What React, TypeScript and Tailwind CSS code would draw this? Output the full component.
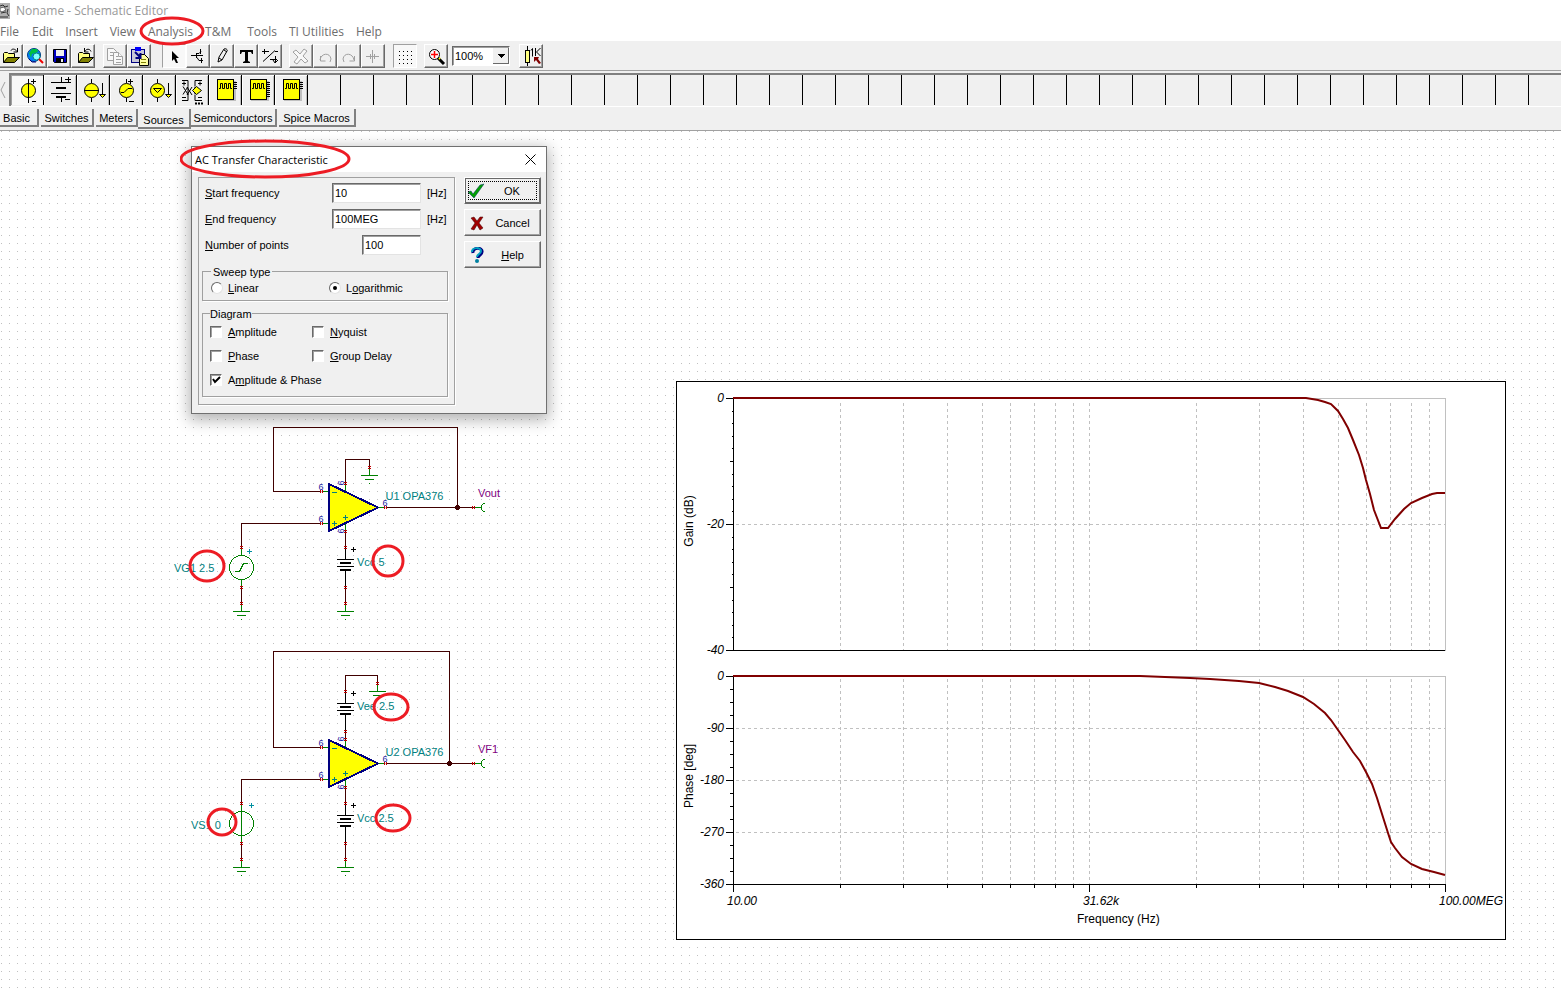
import type { ReactNode } from 'react';

const UI = "font-['Open_Sans','Noto_Sans',sans-serif]";
const SANS = "font-['Liberation_Sans',Arial,sans-serif]";
const RAISED = 'border border-t-white border-l-white border-r-[#696969] border-b-[#696969] shadow-[inset_-1px_-1px_0_#a0a0a0]';
const SUNKEN = 'border border-t-[#a0a0a0] border-l-[#a0a0a0] border-r-white border-b-white';

const MENU = [
  { label: 'File', space: 'mr-[13px]' },
  { label: 'Edit', space: 'mr-3' },
  { label: 'Insert', space: 'mr-3' },
  { label: 'View', space: 'mr-3' },
  { label: 'Analysis', space: 'mr-3' },
  { label: 'T&M', space: 'mr-4' },
  { label: 'Tools', space: 'mr-3' },
  { label: 'TI Utilities', space: 'mr-3' },
  { label: 'Help', space: 'mr-3' },
];

const ICONS: Record<string, ReactNode> = {
  open: (
    <>
      <path d="M4.500 18.500V9.500l1-1h3l1 1h6v5" fill="#ffff80" stroke="#000" />
      <path d="M4.500 18.500l4-5h12l-5 5z" fill="#808000" stroke="#000" />
      <path d="M12 6.500c1-2 4-2 6 1M18.500 4v4h-4" fill="none" stroke="#000" />
    </>
  ),
  globe: (
    <>
      <circle cx="11" cy="11" r="6.500" fill="#0080ff" stroke="#004080" />
      <path d="M6 9l3-4 5 0 1 3-3 1-3 1-1 4zM12 12l4-3 1 2-3 4z" fill="#00c040" />
      <circle cx="13.500" cy="12.500" r="3.500" fill="#80ffff" stroke="#008080" />
      <path d="M16 15l4 4" stroke="#f00000" strokeWidth="2" />
      <path d="M6 15l3 3 4 0" fill="none" stroke="#000080" />
    </>
  ),
  save: (
    <>
      <path d="M6.500 5.500h13v13h-12l-1-1z" fill="#0000c0" stroke="#000" />
      <rect x="9" y="6" width="8" height="6" fill="#f0f0f0" />
      <rect x="9" y="14" width="8" height="5" fill="#000" />
      <rect x="14" y="15" width="2" height="3" fill="#f0f0f0" />
    </>
  ),
  back: (
    <>
      <path d="M7.500 18.500V9.500l1-1h3l1 1h6v5" fill="#ffff80" stroke="#000" />
      <path d="M7.500 18.500l4-5h11l-5 5z" fill="#808000" stroke="#000" />
      <path d="M14 7.500c1-3 5-3 6 0M13.500 4v4h4" fill="none" stroke="#000" />
    </>
  ),
  copy: (
    <g fill="#f8f8f8" stroke="#a0a0a0">
      <path d="M4.500 4.500h6l3 3v9h-9z" />
      <path d="M7 8.500h3M7 11.500h4" />
      <path d="M10.500 8.500h5l4 4v8h-9z" />
      <path d="M15.500 8.500v4h4M13 12.500h2M13 15.500h5M13 18.500h5" />
    </g>
  ),
  paste: (
    <>
      <rect x="4.500" y="5.500" width="13" height="13" fill="#c8c8d8" stroke="#000080" />
      <rect x="8" y="3" width="6" height="4" fill="#0000ff" />
      <path d="M12.500 10.500h5l4 4v7h-9z" fill="#ffffa0" stroke="#000" />
      <path d="M14 15.500h5M14 18.500h5" stroke="#808000" />
      <path d="M8 8l5 5M13.500 9v5h-5" fill="none" stroke="#000080" strokeWidth="2" />
    </>
  ),
  arrow: <path d="M10 7v10l2-2 2 4h2l-2-5h3z" fill="#000" />,
  node: <path d="M5 11.500h5M10.500 9v5M11 9.500h2l2-2M10 11.500h7M11 13.500l2 3h4M14.500 5v5M15.500 14v5" fill="none" stroke="#000" />,
  pencil: <path d="M8 18l1-5 5-8c2-1 4 1 3 2l-5 9zM9 14l3 2M14 6l3 2" fill="#f0f0f0" stroke="#000" />,
  text: <path d="M6 6h13v4h-1l-1-2h-3v9l2 1v1H9v-1l2-1V8H8l-1 2H6z" fill="#000" />,
  tools: <path d="M4 7.500h7M6.500 5v5M5 17.500l12-11M12 15.500h7M17.500 12v7M15 16l2 3 3-3M17 7.500h3" fill="none" stroke="#000" />,
  remove: (
    <path d="M7 6l4 4 4-5 3 2-4 5 5 5-3 2-4-4-4 5-3-2 4-5-5-5z" fill="#f8f8f8" stroke="#a0a0a0" />
  ),
  undo: <path d="M7 16c1-7 10-8 11-1l-1 3M7.500 12v5h5" fill="none" stroke="#a0a0a0" />,
  redo: <path d="M17 16c-1-7-10-8-11-1l1 3M17.500 12v5h-5" fill="none" stroke="#a0a0a0" />,
  plus: <path d="M5 12.500h13M11.500 6v13M9.500 10v5M13.500 10v5" stroke="#a0a0a0" fill="none" />,
  grid: (
    <g fill="#000">
      {[7, 11, 15, 19].map((y) => [6, 10, 14, 18].map((x) => <rect key={`${x}-${y}`} x={x} y={y} width="1" height="1" />))}
    </g>
  ),
  zoom: (
    <>
      <circle cx="10.500" cy="10.500" r="5" fill="#fff" stroke="#000" />
      <path d="M10.500 7v7M7 10.500h7" stroke="#f00" strokeWidth="1.500" />
      <path d="M14 14l6 6" stroke="#000" strokeWidth="3" />
      <path d="M15 14l1 1" stroke="#ffff00" strokeWidth="2" />
    </>
  ),
};

const TOOL_GROUPS: { space: string; names: string[] }[] = [
  { space: '-ml-px', names: ['open', 'globe', 'save', 'back'] },
  { space: 'ml-2', names: ['copy', 'paste'] },
  { space: 'ml-[11px]', names: ['arrow', 'node', 'pencil', 'text', 'tools'] },
  { space: 'ml-[7px]', names: ['remove', 'undo', 'redo', 'plus'] },
  { space: 'ml-2', names: ['grid'] },
  { space: 'ml-[7px]', names: ['zoom'] },
];

function ToolButton({ name }: { name: string }) {
  const pressed = name === 'arrow' || name === 'grid';
  return (
    <button aria-label={name} className={`size-6 ${pressed ? `bg-[#f8f8f8] ${SUNKEN}` : RAISED}`}>
      <svg viewBox="1 1 22 22" className="block size-[22px]">
        {ICONS[name]}
      </svg>
    </button>
  );
}

function PulseIcon({ pins }: { pins: number }) {
  return (
    <>
      <rect x="9" y="6" width="18" height="20" fill="#c0c0c0" />
      <rect x="8.500" y="4.500" width="16" height="20" fill="#ff0" stroke="#000" />
      <path d="M10 13.500h1.500v-5h2v5h2v-5h2v5h2v-5h2v5h1.500" fill="none" stroke="#000" />
      {Array.from({ length: pins }, (_, i) => (
        <path key={i} d={`M25 ${7.5 + i * 2}h3`} stroke="#000" />
      ))}
    </>
  );
}

const PARTS: { name: string; art: ReactNode }[] = [
  {
    name: 'Voltage source',
    art: (
      <>
        <circle cx="17.500" cy="15.500" r="7" fill="#ff0" stroke="#000" />
        <path d="M17.500 4v24M20 6.500h5M22.500 4v5M21 26.500h4" stroke="#000" />
      </>
    ),
  },
  {
    name: 'Battery',
    art: (
      <>
        <path d="M17.500 2v5M7 7.500h20M7 18.500h20M17.500 22v5M21 4.500h6M24.500 2v5M21 24.500h5" stroke="#000" />
        <path d="M12 13h10M12 22h10" stroke="#000" strokeWidth="2" />
      </>
    ),
  },
  {
    name: 'Current source',
    art: (
      <>
        <circle cx="14.500" cy="15.500" r="7" fill="#ff0" stroke="#000" />
        <path d="M14.500 4v4M14.500 23v4M7 15.500h15M25.500 8v14" stroke="#000" />
        <path d="M22.500 19.500h6l-3 3z" fill="#ff0" stroke="#000" />
      </>
    ),
  },
  {
    name: 'Voltage generator',
    art: (
      <>
        <circle cx="16.500" cy="15.500" r="7" fill="#ff0" stroke="#000" />
        <path d="M16.500 4v4M16.500 23v4M18 6.500h5M20.500 4v5M19 26.500h5M11 17.500h3l4-4h4" fill="none" stroke="#000" />
      </>
    ),
  },
  {
    name: 'Current generator',
    art: (
      <>
        <circle cx="14.500" cy="15.500" r="7" fill="#ff0" stroke="#000" />
        <path d="M14.500 4v4M14.500 23v4M10.500 13.500h8l-4 4zM25.500 8v14" fill="none" stroke="#000" />
        <path d="M22.500 19.500h6l-3 3z" fill="#ff0" stroke="#000" />
      </>
    ),
  },
  {
    name: 'Controlled source',
    art: (
      <>
        <path d="M6 5.500h6v6l-5 8M12 25.500v-6l-5-8M6 25.500h6M26 5.500h-7v6M26 25.500h-7v-6" fill="none" stroke="#000" />
        <path d="M12 12v8M19 12v7M6 8.500h4M8 6.500v4M6 22.500h4M22 8.500h4M24 6.500v4M22 22.500h4M11 12l5 8M16 12l-5 8" stroke="#000" />
        <path d="M16.500 15.500l4-4 5 4-5 4z" fill="#ff0" stroke="#000" />
        <path d="M19 28.500h8" stroke="#000" strokeWidth="2" strokeDasharray="2 1" />
      </>
    ),
  },
  { name: 'Digital source', art: <PulseIcon pins={4} /> },
  { name: 'Digital bus source', art: <PulseIcon pins={8} /> },
  { name: 'Clock source', art: <PulseIcon pins={4} /> },
];

const TABS = [
  { label: 'Basic', width: 'w-[39px] pr-[4px]' },
  { label: 'Switches', width: 'w-[53px] ml-[2px]' },
  { label: 'Meters', width: 'w-[42px] ml-[2px]' },
  { label: 'Sources', width: 'w-[53px]' },
  { label: 'Semiconductors', width: 'w-[86px]' },
  { label: 'Spice Macros', width: 'w-[77px] ml-[2px]' },
];

/* ---------- schematic ---------- */

function Mark({ x, y, flat = false }: { x: number; y: number; flat?: boolean }) {
  return flat ? (
    <path d={`M${x - 1} ${y - 1}v2M${x + 1} ${y - 1}v2`} stroke="#c00000" />
  ) : (
    <path d={`M${x - 1} ${y - 1}h2M${x - 1} ${y + 1}h2`} stroke="#c00000" />
  );
}

function Ground({ x, y }: { x: number; y: number }) {
  return <path d={`M${x} ${y - 6}v6M${x - 8} ${y}h16M${x - 4} ${y + 4}h8M${x} ${y + 8}h0`} stroke="#008000" />;
}

function Battery({ x, y }: { x: number; y: number }) {
  return (
    <>
      <path d={`M${x} ${y - 12}v12M${x - 8} ${y}h16M${x - 8} ${y + 7}h16M${x} ${y + 11}v17`} stroke="#000" />
      <path d={`M${x - 4.5} ${y + 3.5}h9M${x - 4.5} ${y + 10.5}h9`} stroke="#000" strokeWidth="2" />
      <path d={`M${x + 6} ${y - 10}h4M${x + 8} ${y - 12}v4`} stroke="#000" />
      <Mark x={x} y={y - 12} />
      <Mark x={x} y={y + 28} />
    </>
  );
}

// y is the line of the output pin
function OpAmp({ y, name }: { y: number; name: string }) {
  return (
    <>
      <path d={`M328.5 ${y - 23.5}V${y + 23.5}L377.5 ${y}Z`} fill="#ff0" stroke="#000080" strokeWidth="2" />
      <path d={`M323 ${y - 16}h4M323 ${y + 16}h4M379 ${y}h5M345 ${y - 23}v6M345 ${y + 17}v6`} stroke="#008000" />
      <path d={`M332 ${y - 15}h4M332 ${y + 16}h4M334 ${y + 14}v4M343 ${y + 10}h4M345 ${y + 8}v4`} stroke="#008080" />
      <Mark x={321} y={y - 16} flat />
      <Mark x={321} y={y + 16} flat />
      <Mark x={385} y={y} flat />
      <Mark x={345} y={y - 24} />
      <Mark x={345} y={y + 24} />
      <g fontSize="9" fill="#2020a0">
        <text x="318" y={y - 18}>6</text>
        <text x="318" y={y + 14}>6</text>
        <text x="382" y={y - 2}>6</text>
        <text transform={`translate(343 ${y - 22}) rotate(-90)`}>6</text>
        <text transform={`translate(343 ${y + 26}) rotate(-90)`}>6</text>
      </g>
      <text x="385" y={y - 8} fill="#008080">{name}</text>
    </>
  );
}

function Schematic() {
  return (
    <svg
      viewBox="160 420 360 470"
      className={`absolute left-[160px] top-[289px] h-[470px] w-[360px] text-[11px] ${SANS}`}
    >
      <g transform="translate(0.5 0.5)" fill="none" strokeLinecap="square" shapeRendering="crispEdges">
        <g stroke="#400000">
          <path d="M320 491H273V427H457V507M386 507H473M320 523H241V547M345 483V459H369V467M345 531V547M241 587V603M345 587V603" />
          <path d="M320 747H273V651H449V763M386 763H473M320 779H241V803M345 691V675H377V683M345 731V739M345 787V803M241 843V859M345 843V859" />
        </g>

        <Ground x={369} y={475} />
        <Ground x={345} y={611} />
        <Ground x={241} y={611} />
        <Ground x={377} y={691} />
        <Ground x={345} y={867} />
        <Ground x={241} y={867} />
        <Battery x={345} y={559} />
        <Battery x={345} y={703} />
        <Battery x={345} y={815} />
        <OpAmp y={507} name="U1 OPA376" />
        <OpAmp y={763} name="U2 OPA376" />

        <g stroke="#008000">
          <circle cx="241" cy="567" r="12" />
          <circle cx="241" cy="823" r="12" />
          <path d="M241 549v5M241 580v6M235 571h4l4 -8h4M241 805v37" />
          <path d="M475 507h6M484 503h-1l-2 2v4l2 2h1M475 763h6M484 759h-1l-2 2v4l2 2h1" />
        </g>
        <path d="M247 551h4M249 549v4M249 805h4M251 803v4" stroke="#0090a0" />
        {[547, 587, 603, 803, 843, 859].map((y) => (
          <Mark key={y} x={241} y={y} />
        ))}
        {[603, 859].map((y) => (
          <Mark key={y} x={345} y={y} />
        ))}
        <Mark x={369} y={467} />
        <Mark x={377} y={683} />
        <Mark x={473} y={507} flat />
        <Mark x={473} y={763} flat />
        <circle cx="457" cy="507" r="2" fill="#400000" stroke="#400000" />
        <circle cx="449" cy="763" r="2" fill="#400000" stroke="#400000" />
      </g>

      <g fill="#008080">
        <text x="174" y="572">VG1 2.5</text>
        <text x="357" y="566">Vcc 5</text>
        <text x="357" y="710">Vee 2.5</text>
        <text x="357" y="822">Vcc 2.5</text>
        <text x="191" y="829">VS1 0</text>
      </g>
      <g fill="#800080">
        <text x="478" y="497">Vout</text>
        <text x="478" y="753">VF1</text>
      </g>

      <g fill="none" stroke="#ed1c24" strokeWidth="3">
        <ellipse cx="207" cy="566" rx="17" ry="15" />
        <ellipse cx="388" cy="561" rx="15" ry="15" />
        <ellipse cx="391" cy="707" rx="17" ry="13" />
        <ellipse cx="393" cy="818" rx="17" ry="13" />
        <ellipse cx="222" cy="822" rx="14" ry="13" />
      </g>
    </svg>
  );
}

/* ---------- diagram ---------- */

const GRID_X = [840, 903, 947, 982, 1010, 1034, 1055, 1073, 1089, 1196, 1259, 1303, 1338, 1366, 1390, 1411, 1429];

const GAIN =
  '733,398 1306,398 1312,399 1318,400 1325,402 1331,404 1338,411 1343,419 1348,428 1353,440 1359,455 1363,468 1366,480 1370,494 1374,510 1381,528 1388,528 1395,519 1404,509 1411,503 1422,498 1432,494 1437,493 1445,493';

const PHASE =
  '733,676 1140,676 1165,677 1190,678 1210,679 1239,681 1259,683 1275,687 1288,691 1303,697 1314,704 1325,713 1331,720 1338,730 1345,740 1353,752 1360,761 1366,772 1372,784 1377,798 1382,814 1388,833 1391,842 1395,848 1402,857 1411,864 1422,869 1434,872 1445,875';

const Y_LABELS = [
  { text: '0', y: 398 },
  { text: '-20', y: 524 },
  { text: '-40', y: 650 },
  { text: '0', y: 676 },
  { text: '-90', y: 728 },
  { text: '-180', y: 780 },
  { text: '-270', y: 832 },
  { text: '-360', y: 884 },
];

function Diagram() {
  return (
    <svg
      viewBox="676 381 830 559"
      className={`absolute left-[676px] top-[250px] h-[559px] w-[830px] bg-white text-[12px] ${SANS}`}
    >
      <g transform="translate(0.5 0.5)" fill="none" shapeRendering="crispEdges">
        <rect x="676" y="381" width="829" height="558" stroke="#000" />
        <g stroke="#c0c0c0">
          <path d="M733 398H1445V650M733 676H1445V884" />
          <g strokeDasharray="3 3">
            {GRID_X.map((x) => (
              <path key={x} d={`M${x} 402V650M${x} 678V884`} />
            ))}
            {[524, 728, 780, 832].map((y) => (
              <path key={y} d={`M735 ${y}H1445`} />
            ))}
          </g>
        </g>
        <g stroke="#000" strokeLinecap="square">
          <path d="M733 398V650H1444M733 676V884H1444" />
          {Y_LABELS.map(({ y }) => (
            <path key={y} d={`M726 ${y}h7`} />
          ))}
          {Array.from({ length: 19 }, (_, i) => (
            <path key={i} d={`M${i % 10 === 4 ? 730 : 732} ${398 + Math.round((i + 1) * 12.6)}H733`} />
          ))}
          {Array.from({ length: 15 }, (_, i) => (
            <path key={i} d={`M730 ${676 + (i + 1) * 13}h3`} />
          ))}
          {GRID_X.map((x) => (
            <path key={x} d={`M${x} 884v3`} />
          ))}
          <path d="M733 884v7M1089 884v7M1445 884v7" />
        </g>
      </g>
      <g fill="none" stroke="#800000" strokeWidth="2">
        <polyline points={GAIN} />
        <polyline points={PHASE} />
      </g>
      <g className="italic">
        {Y_LABELS.map(({ text, y }) => (
          <text key={y} x="724" y={y + 4} textAnchor="end">{text}</text>
        ))}
        <text x="727" y="905">10.00</text>
        <text x="1083" y="905">31.62k</text>
        <text x="1439" y="905">100.00MEG</text>
      </g>
      <text x="1077" y="923">Frequency (Hz)</text>
      <text transform="translate(693 521) rotate(-90)" textAnchor="middle">Gain (dB)</text>
      <text transform="translate(693 776) rotate(-90)" textAnchor="middle">Phase [deg]</text>
    </svg>
  );
}

/* ---------- dialog ---------- */

const FIELD = 'h-5 border border-t-[#696969] border-l-[#696969] border-r-[#e3e3e3] border-b-[#e3e3e3] bg-white px-[2px] pb-px leading-[14px] shadow-[inset_1px_1px_0_#a0a0a0]';
const GROOVE = 'border border-[#a0a0a0] shadow-[1px_1px_0_#fff]';

function Field({ id, hot, label, value, width, unit }: { id: string; hot: string; label: string; value: string; width: string; unit?: string }) {
  return (
    <div className="flex items-center">
      <label htmlFor={id} className="flex-1">
        <u>{hot}</u>
        {label}
      </label>
      <input id={id} defaultValue={value} className={`${FIELD} ${width}`} />
      <span className="w-[30px] pl-[6px]">{unit}</span>
    </div>
  );
}

function Tick({ label, checked = false, className = '' }: { label: ReactNode; checked?: boolean; className?: string }) {
  return (
    <label className={`flex h-6 items-center gap-[6px] ${className}`}>
      <span className="relative size-3">
        <input
          type="checkbox"
          defaultChecked={checked}
          className="peer block size-3 appearance-none border border-t-[#696969] border-l-[#696969] border-r-white border-b-white bg-white shadow-[inset_1px_1px_0_#a0a0a0]"
        />
        <svg viewBox="0 0 12 12" className="pointer-events-none absolute inset-0 hidden size-3 peer-checked:block">
          <path d="M3 5l2 3 5-5" fill="none" stroke="#000" strokeWidth="2" />
        </svg>
      </span>
      <span>{label}</span>
    </label>
  );
}

function Choice({ label, checked = false }: { label: ReactNode; checked?: boolean }) {
  return (
    <label className="flex items-center gap-[5px]">
      <span className="relative size-3">
        <input
          type="radio"
          name="sweep"
          defaultChecked={checked}
          className="peer block size-3 appearance-none rounded-full border border-t-[#696969] border-l-[#696969] border-r-[#e3e3e3] border-b-[#e3e3e3] bg-white"
        />
        <svg viewBox="0 0 12 12" className="pointer-events-none absolute inset-0 hidden size-3 peer-checked:block">
          <circle cx="6" cy="6" r="2" />
        </svg>
      </span>
      <span>{label}</span>
    </label>
  );
}

function AcTransferDialog() {
  return (
    <div
      role="dialog"
      aria-label="AC Transfer Characteristic"
      className={`absolute left-[191px] top-[15px] w-[356px] border border-[#707070] bg-[#f0f0f0] text-[11px] leading-[14px] text-black shadow-[0_4px_14px_2px_rgba(0,0,0,0.3)] ${SANS}`}
    >
      <div className={`flex h-[25px] items-center justify-between bg-white pr-[10px] pl-[3px] ${UI}`}>
        <h2>AC Transfer Characteristic</h2>
        <button aria-label="Close">
          <svg viewBox="0 0 11 11" className="block size-[11px]">
            <path d="M0.500 0.500l10 10M10.500 0.500l-10 10" stroke="#000" />
          </svg>
        </button>
      </div>
      <svg viewBox="0 0 172 42" className="pointer-events-none absolute -top-2 -left-3 h-[42px] w-[172px]">
        <ellipse cx="85" cy="20" rx="84" ry="18" fill="none" stroke="#ed1c24" strokeWidth="3" />
      </svg>

      <div className="flex items-start gap-[9px] px-[6px] pt-[5px] pb-[8px]">
        <div className={`w-[257px] px-[3px] pt-[5px] pb-[7px] ${GROOVE}`}>
          <div className="flex flex-col gap-[6px] pl-[3px]">
            <Field id="start" hot="S" label="tart frequency" value="10" width="w-[89px]" unit="[Hz]" />
            <Field id="end" hot="E" label="nd frequency" value="100MEG" width="w-[89px]" unit="[Hz]" />
            <Field id="points" hot="N" label="umber of points" value="100" width="w-[59px]" />
          </div>

          <fieldset className={`mt-2 mr-[3px] h-[38px] pl-2 ${GROOVE}`}>
            <legend className="px-[2px] pt-[2px]">Sweep type</legend>
            <div className="grid grid-cols-2 pt-[2px]">
              <Choice label={<><u>L</u>inear</>} />
              <Choice label={<>L<u>o</u>garithmic</>} checked />
            </div>
          </fieldset>

          <fieldset className={`mt-1 mr-[3px] pb-1 pl-[7px] ${GROOVE}`}>
            <legend className="pt-[2px]">Diagram</legend>
            <div className="-mt-px grid grid-cols-[102px_1fr]">
              <Tick label={<><u>A</u>mplitude</>} />
              <Tick label={<><u>N</u>yquist</>} />
              <Tick label={<><u>P</u>hase</>} />
              <Tick label={<><u>G</u>roup Delay</>} />
              <Tick label={<>A<u>m</u>plitude &amp; Phase</>} checked className="col-span-2" />
            </div>
          </fieldset>
        </div>

        <div className="-mr-px flex flex-1 flex-col gap-[5px]">
          <button className={`relative flex h-[27px] items-center pl-[3px] ring-1 ring-[#696969] ring-inset ${RAISED}`}>
            <svg viewBox="0 0 16 16" className="size-4">
              <path d="M0 9l3-1 2 3 7-9 4-1-10 14z" fill="#00a000" stroke="#003060" strokeWidth="0.500" />
            </svg>
            <span className="flex-1">OK</span>
            <span className="pointer-events-none absolute inset-[3px] border border-dotted border-black" />
          </button>
          <button className={`flex h-[27px] items-center pl-1 ${RAISED}`}>
            <svg viewBox="0 0 16 16" className="size-4">
              <path d="M2 3l3-1 3 4 3-4 3 0-4 6 4 5-3 2-3-5-3 5-3-1 4-6z" fill="#a00000" stroke="#400000" strokeWidth="0.500" />
            </svg>
            <span className="flex-1">Cancel</span>
          </button>
          <button className={`flex h-[27px] items-center pl-1 ${RAISED}`}>
            <svg viewBox="0 0 16 16" className="size-4">
              <path d="M4 6c-1-6 10-6 9-1 0 3-4 3-4 6" fill="none" stroke="#000080" strokeWidth="3" />
              <path d="M3 5c0-5 9-5 9-1 0 3-4 3-4 6" fill="none" stroke="#00a0c0" strokeWidth="2" />
              <circle cx="8" cy="14" r="2" fill="#0080a0" />
            </svg>
            <span className="flex-1"><u>H</u>elp</span>
          </button>
        </div>
      </div>
    </div>
  );
}

/* ---------- window ---------- */

export default function App() {
  return (
    <div className={`flex min-h-screen flex-col overflow-hidden bg-white text-[11px] text-black ${SANS}`}>
      <header className={`flex h-[22px] items-center gap-[6px] text-[12px] text-[#999] ${UI}`}>
        <svg viewBox="0 0 10 16" className="h-4 w-[10px]">
          <rect width="10" height="16" fill="#b0b0b0" />
          <path d="M0 3l3-1 2 2 3-1M1 10l5-1M8 6l-1 4 2 3M0 14h8" fill="none" stroke="#303030" />
          <path d="M0 5l4-1 2 3-4 2-2-1z" fill="#fff" stroke="#606060" />
        </svg>
        <h1>Noname - Schematic Editor</h1>
      </header>

      <nav className={`flex h-[19px] items-center text-[12px] leading-4 text-[#6d6d6d] ${UI}`}>
        {MENU.map(({ label, space }) => (
          <button key={label} className={`relative whitespace-nowrap ${space}`}>
            {label}
            {label === 'Analysis' && (
              <svg viewBox="0 0 66 30" className="pointer-events-none absolute -top-2 -left-[9px] z-10 h-[30px] w-[66px] max-w-none">
                <ellipse cx="33" cy="15" rx="31" ry="13" fill="none" stroke="#ed1c24" strokeWidth="3" />
              </svg>
            )}
          </button>
        ))}
      </nav>

      <div className="flex h-[30px] items-start border-b border-[#a0a0a0] bg-[#f0f0f0] pt-[3px]">
        {TOOL_GROUPS.map(({ space, names }) => (
          <div key={names[0]} className={`flex ${space}`}>
            {names.map((name) => (
              <ToolButton key={name} name={name} />
            ))}
          </div>
        ))}
        <div className="relative ml-1 mt-[2px]">
          <select
            aria-label="Zoom"
            className="block h-5 w-[58px] appearance-none border border-t-[#696969] border-l-[#696969] border-r-white border-b-white bg-white pl-[2px] shadow-[inset_1px_1px_0_#a0a0a0]"
          >
            <option>100%</option>
          </select>
          <svg viewBox="0 0 16 16" className="pointer-events-none absolute top-[2px] right-[1px] size-4" shapeRendering="crispEdges">
            <rect width="16" height="16" fill="#696969" />
            <rect width="15" height="15" fill="#f0f0f0" />
            <path d="M4 6h8l-4 4z" fill="#000" />
          </svg>
        </div>
        <button aria-label="Component value" className={`ml-[9px] size-6 ${RAISED}`}>
          <svg viewBox="1 1 22 22" className="block size-[22px]">
            <path d="M8.500 2v20" stroke="#000" />
            <rect x="6.500" y="6.500" width="4" height="12" fill="#ffff80" stroke="#000" />
            <path d="M12 6.500l1.500-2v8M16.500 4v8M21.500 4l-4 4 4 4" fill="none" stroke="#000" />
            <path d="M15 13h5l-1 2 3 4-2 1-3-4-2 2z" fill="#800000" />
          </svg>
        </button>
      </div>

      <div className="flex h-9 overflow-hidden border-b border-white bg-[#f0f0f0] pt-[2px]">
        <button aria-label="Scroll left" className="flex w-[11px] shrink-0 items-center border-r-2 border-[#808080]">
          <svg viewBox="0 0 8 20" className="h-5 w-2">
            <path d="M5 2L1 10l4 8" fill="none" stroke="#a0a0a0" />
          </svg>
        </button>
        <div className="flex h-8 flex-1 overflow-hidden border-t-2 border-[#808080]">
          {Array.from({ length: 80 }, (_, i) => {
            const part = PARTS[i];
            if (!part) return <span key={i} className="w-[33px] shrink-0 border-r border-black" />;
            return (
              <button
                key={i}
                aria-label={part.name}
                className={`w-[33px] shrink-0 border-r border-black ${i === 0 ? 'bg-[#f8f8f8] shadow-[inset_1px_1px_0_#a0a0a0]' : 'shadow-[inset_1px_1px_0_#fff,inset_-1px_0_0_#c0c0c0]'}`}
              >
                <svg viewBox="0 0 32 30" className="block h-[30px] w-8">
                  {part.art}
                </svg>
              </button>
            );
          })}
        </div>
      </div>

      <div className="flex h-6 items-start border-b border-[#a0a0a0] bg-[#f0f0f0] pt-[2px]">
        {TABS.map(({ label, width }) => (
          <button
            key={label}
            className={`border-r-2 border-b-2 border-[#808080] bg-[#f0f0f0] whitespace-nowrap ${width} ${
              label === 'Sources' ? 'h-5 pt-[3px]' : 'h-[18px] pt-px'
            }`}
          >
            {label}
          </button>
        ))}
      </div>

      <main className="relative min-h-[820px] flex-1 overflow-hidden">
        <svg className="absolute inset-0 size-full" shapeRendering="crispEdges">
          <defs>
            <pattern id="dots" width="8" height="8" patternUnits="userSpaceOnUse">
              <rect x="1" y="0" width="1" height="1" fill="#c0c0c0" />
            </pattern>
          </defs>
          <rect width="100%" height="100%" fill="url(#dots)" />
        </svg>
        <Schematic />
        <Diagram />
        <AcTransferDialog />
      </main>
    </div>
  );
}
